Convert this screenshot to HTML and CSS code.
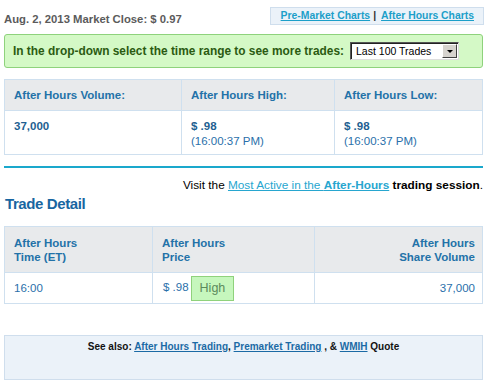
FILE: index.html
```html
<!DOCTYPE html>
<html>
<head>
<meta charset="utf-8">
<link rel="stylesheet" href="styles.css">
</head>
<body>
<div class="page">
  <div class="top-row">
    <div class="close-info">Aug. 2, 2013 Market Close: $ 0.97</div>
    <div class="chart-links"><a href="#">Pre-Market Charts</a><span class="sep">|</span><a href="#">After Hours Charts</a></div>
  </div>

  <div class="range-box">
    <span class="range-label">In the drop-down select the time range to see more trades:</span>
    <span class="fake-select"><span class="fs-text">Last 100 Trades</span><span class="fs-btn"><span class="fs-arrow"></span></span></span>
  </div>

  <table class="summary">
    <tr class="head">
      <th class="c1">After Hours Volume:</th>
      <th class="c2">After Hours High:</th>
      <th class="c3">After Hours Low:</th>
    </tr>
    <tr class="data">
      <td><b>37,000</b></td>
      <td><b>$ .98</b><br><span class="time">(16:00:37 PM)</span></td>
      <td><b>$ .98</b><br><span class="time">(16:00:37 PM)</span></td>
    </tr>
  </table>

  <div class="rule"></div>

  <div class="visit">Visit the <a href="#">Most Active in the <b>After-Hours</b></a> <b>trading session</b>.</div>

  <h2 class="trade-title">Trade Detail</h2>

  <table class="trades">
    <tr class="head">
      <th class="t1">After Hours<br>Time (ET)</th>
      <th class="t2">After Hours<br>Price</th>
      <th class="t3">After Hours<br>Share Volume</th>
    </tr>
    <tr class="data">
      <td>16:00</td>
      <td><span class="price">$ .98</span><span class="badge">High</span></td>
      <td class="right">37,000</td>
    </tr>
  </table>

  <div class="see-also">See also: <a href="#">After Hours Trading</a>, <a href="#">Premarket Trading</a> , &amp; <a href="#">WMIH</a> Quote</div>
</div>
</body>
</html>
```

FILE: styles.css
```css
html, body {
  margin: 0;
  padding: 0;
  background: #ffffff;
}
body {
  font-family: "Liberation Sans", Arial, sans-serif;
  font-size: 12px;
  color: #333;
}
.page {
  width: 479px;
  margin-left: 4px;
}
.top-row {
  display: flex;
  justify-content: space-between;
  align-items: flex-start;
  height: 34px;
}
.close-info {
  margin-top: 13px;
  font-weight: bold;
  font-size: 11.3px;
  color: #5b5b5b;
}
.chart-links {
  margin-top: 7px;
  margin-right: -1px;
  height: 16px;
  padding: 0 9px 0 10px;
  background: #ebf2f9;
  border: 1px solid #cfdeed;
  font-size: 10.4px;
  font-weight: bold;
  line-height: 16px;
  display: flex;
  align-items: center;
}
.chart-links a {
  color: #1c9fc9;
}
.chart-links .sep {
  color: #333;
  margin: 0 5px 0 3px;
}
.range-box {
  height: 32px;
  background: #d4f9c6;
  border: 1px solid #8ed27c;
  border-radius: 3px;
  display: flex;
  align-items: center;
  padding-left: 8px;
}
.range-label {
  font-size: 11.9px;
  font-weight: bold;
  color: #2b5b12;
  white-space: nowrap;
}
.fake-select {
  margin-left: 6px;
  width: 107px;
  height: 16px;
  border: 1px solid #555;
  border-right-color: #ddd;
  border-bottom-color: #ddd;
  background: #fff;
  display: flex;
  align-items: center;
  box-shadow: inset 1px 1px 0 #222;
}
.fs-text {
  flex: 1;
  font-size: 10.5px;
  color: #000;
  padding-left: 5px;
  line-height: 16px;
}
.fs-btn {
  width: 15px;
  height: 14px;
  margin-right: 1px;
  background: #d6d3ce;
  border: 1px solid #fff;
  border-right-color: #404040;
  border-bottom-color: #404040;
  box-sizing: border-box;
  display: flex;
  align-items: center;
  justify-content: center;
}
.fs-arrow {
  width: 0;
  height: 0;
  border-left: 3px solid transparent;
  border-right: 3px solid transparent;
  border-top: 3px solid #000;
}
table {
  border-collapse: collapse;
  width: 479px;
  table-layout: fixed;
}
.summary {
  margin-top: 11px;
}
table th, table td {
  border: 1px solid #cfe0ef;
  text-align: left;
  vertical-align: top;
  padding: 0 9px;
}
.summary .head th {
  height: 30px;
  vertical-align: middle;
  background: #e8eaec;
  color: #2372a8;
  font-size: 11.5px;
}
.summary .c1 { width: 158px; }
.summary .c2 { width: 134px; }
.summary .data td {
  height: 44px;
  padding-top: 8px;
  box-sizing: border-box;
  color: #1e5f91;
  font-size: 11.5px;
  line-height: 15px;
}
.summary .time {
  color: #2a70aa;
}
.rule {
  margin-top: 11px;
  height: 2px;
  background: #1aa8cc;
}
.visit {
  text-align: right;
  margin-top: 10px;
  font-size: 11.8px;
  color: #000;
  line-height: 15px;
}
.visit a {
  color: #27a6cf;
}
.trade-title {
  margin: 1px 0 0 1px;
  font-size: 15px;
  font-weight: bold;
  color: #1866a1;
  letter-spacing: -0.4px;
  line-height: 19px;
}
.trades {
  margin-top: 13px;
}
.trades .head th {
  height: 45px;
  vertical-align: middle;
  background: #e8eaec;
  color: #2372a8;
  font-size: 11.5px;
  line-height: 14px;
}
.trades .t1 { width: 129px; }
.trades .t2 { width: 143px; }
.trades .t3 { text-align: right; padding-right: 7px; }
.trades .data td {
  height: 30px;
  vertical-align: middle;
  color: #2a70aa;
  font-size: 11.5px;
}
.trades .data td.right {
  text-align: right;
  padding-right: 7px;
}
.price {
  margin-left: 1px;
}
.badge {
  display: inline-block;
  margin-left: 2px;
  padding: 0 8px;
  height: 23px;
  line-height: 23px;
  background: #c6f7bd;
  border: 1px solid #8fd27c;
  color: #5b8a5b;
  font-size: 12.5px;
  vertical-align: middle;
}
.see-also {
  margin-top: 31px;
  height: 45px;
  background: #ebf2f9;
  border: 1px solid #cfdeed;
  text-align: center;
  font-size: 10px;
  font-weight: bold;
  color: #111;
  padding-top: 5px;
  box-sizing: border-box;
}
.see-also a {
  color: #1b6aa5;
}
```
